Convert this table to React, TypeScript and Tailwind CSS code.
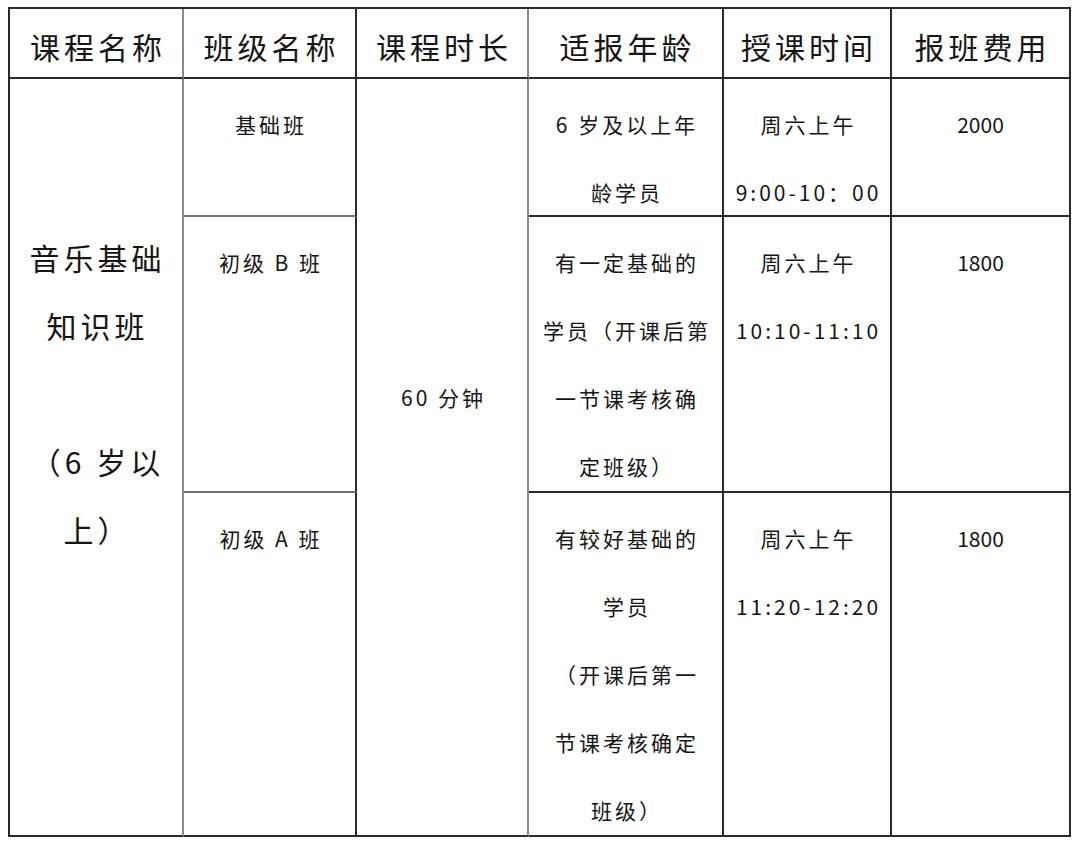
const font = { fontFamily: '"Noto Sans CJK SC", "Noto Sans", sans-serif' };

type Cell = {
  lines: string[];
  cls: string;
};

const dark = "border-[#2a2a2a]";

function Lines({ lines }: { lines: string[] }) {
  return (
    <>
      {lines.map((l, i) => (
        <div key={i} className="whitespace-nowrap h-[68px] leading-[68px]">
          {l || "\u00a0"}
        </div>
      ))}
    </>
  );
}

export default function App() {
  const headers = ["课程名称", "班级名称", "课程时长", "适报年龄", "授课时间", "报班费用"];
  const headerBorder = [
    "border-r-[#8a8a8a]",
    "border-r-[#2a2a2a]",
    "border-r-[#8a8a8a]",
    "border-r-[#2a2a2a]",
    "border-r-[#2a2a2a]",
    "border-r-[#2a2a2a]",
  ];

  const body: Cell[] = [
    {
      lines: ["音乐基础", "知识班", "", "（6 岁以", "上）"],
      cls: "col-start-1 row-start-2 row-span-3 pt-[144px] text-[30px] tracking-[4px] border-r-[#8a8a8a] border-b-[#2a2a2a]",
    },
    { lines: ["基础班"], cls: "col-start-2 row-start-2 pt-[11px] border-r-[#2a2a2a] border-b-[#707070]" },
    { lines: ["初级 B 班"], cls: "col-start-2 row-start-3 pt-[11px] border-r-[#2a2a2a] border-b-[#707070]" },
    { lines: ["初级 A 班"], cls: "col-start-2 row-start-4 pt-[11px] border-r-[#2a2a2a] border-b-[#2a2a2a]" },
    {
      lines: ["60 分钟"],
      cls: "col-start-3 row-start-2 row-span-3 pt-[284px] border-r-[#8a8a8a] border-b-[#2a2a2a]",
    },
    { lines: ["6 岁及以上年", "龄学员"], cls: "col-start-4 row-start-2 pt-[11px] border-r-[#2a2a2a] border-b-[#2a2a2a]" },
    {
      lines: ["有一定基础的", "学员（开课后第", "一节课考核确", "定班级）"],
      cls: "col-start-4 row-start-3 pt-[11px] border-r-[#2a2a2a] border-b-[#2a2a2a]",
    },
    {
      lines: ["有较好基础的", "学员", "（开课后第一", "节课考核确定", "班级）"],
      cls: "col-start-4 row-start-4 pt-[11px] border-r-[#2a2a2a] border-b-[#2a2a2a]",
    },
    { lines: ["周六上午", "9:00-10：00"], cls: "col-start-5 row-start-2 pt-[11px] border-r-[#2a2a2a] border-b-[#2a2a2a]" },
    { lines: ["周六上午", "10:10-11:10"], cls: "col-start-5 row-start-3 pt-[11px] border-r-[#2a2a2a] border-b-[#2a2a2a]" },
    { lines: ["周六上午", "11:20-12:20"], cls: "col-start-5 row-start-4 pt-[11px] border-r-[#2a2a2a] border-b-[#2a2a2a]" },
    { lines: ["2000"], cls: "col-start-6 row-start-2 pt-[11px] !tracking-normal !pl-0 border-r-[#2a2a2a] border-b-[#2a2a2a]" },
    { lines: ["1800"], cls: "col-start-6 row-start-3 pt-[11px] !tracking-normal !pl-0 border-r-[#2a2a2a] border-b-[#2a2a2a]" },
    { lines: ["1800"], cls: "col-start-6 row-start-4 pt-[11px] !tracking-normal !pl-0 border-r-[#2a2a2a] border-b-[#2a2a2a]" },
  ];

  return (
    <div className="w-[1080px] h-[847px] bg-white overflow-hidden text-[#151515]" style={font}>
      <div
        className={`ml-[8px] mt-[7px] w-fit grid grid-cols-[174px_173px_172px_195px_168px_179px] grid-rows-[70px_138px_276px_344px] border-l-2 border-t-2 ${dark}`}
      >
        {headers.map((h, i) => (
          <div
            key={h}
            className={`row-start-1 flex items-center justify-center pt-[6px] pl-[4px] text-[30px] tracking-[4px] border-r-2 border-b-2 border-b-[#2a2a2a] ${headerBorder[i]}`}
          >
            {h}
          </div>
        ))}
        {body.map((c, i) => (
          <div
            key={i}
            className={`flex flex-col items-center pl-[3px] text-[21px] tracking-[3px] border-r-2 border-b-2 ${c.cls}`}
          >
            <Lines lines={c.lines} />
          </div>
        ))}
      </div>
    </div>
  );
}
